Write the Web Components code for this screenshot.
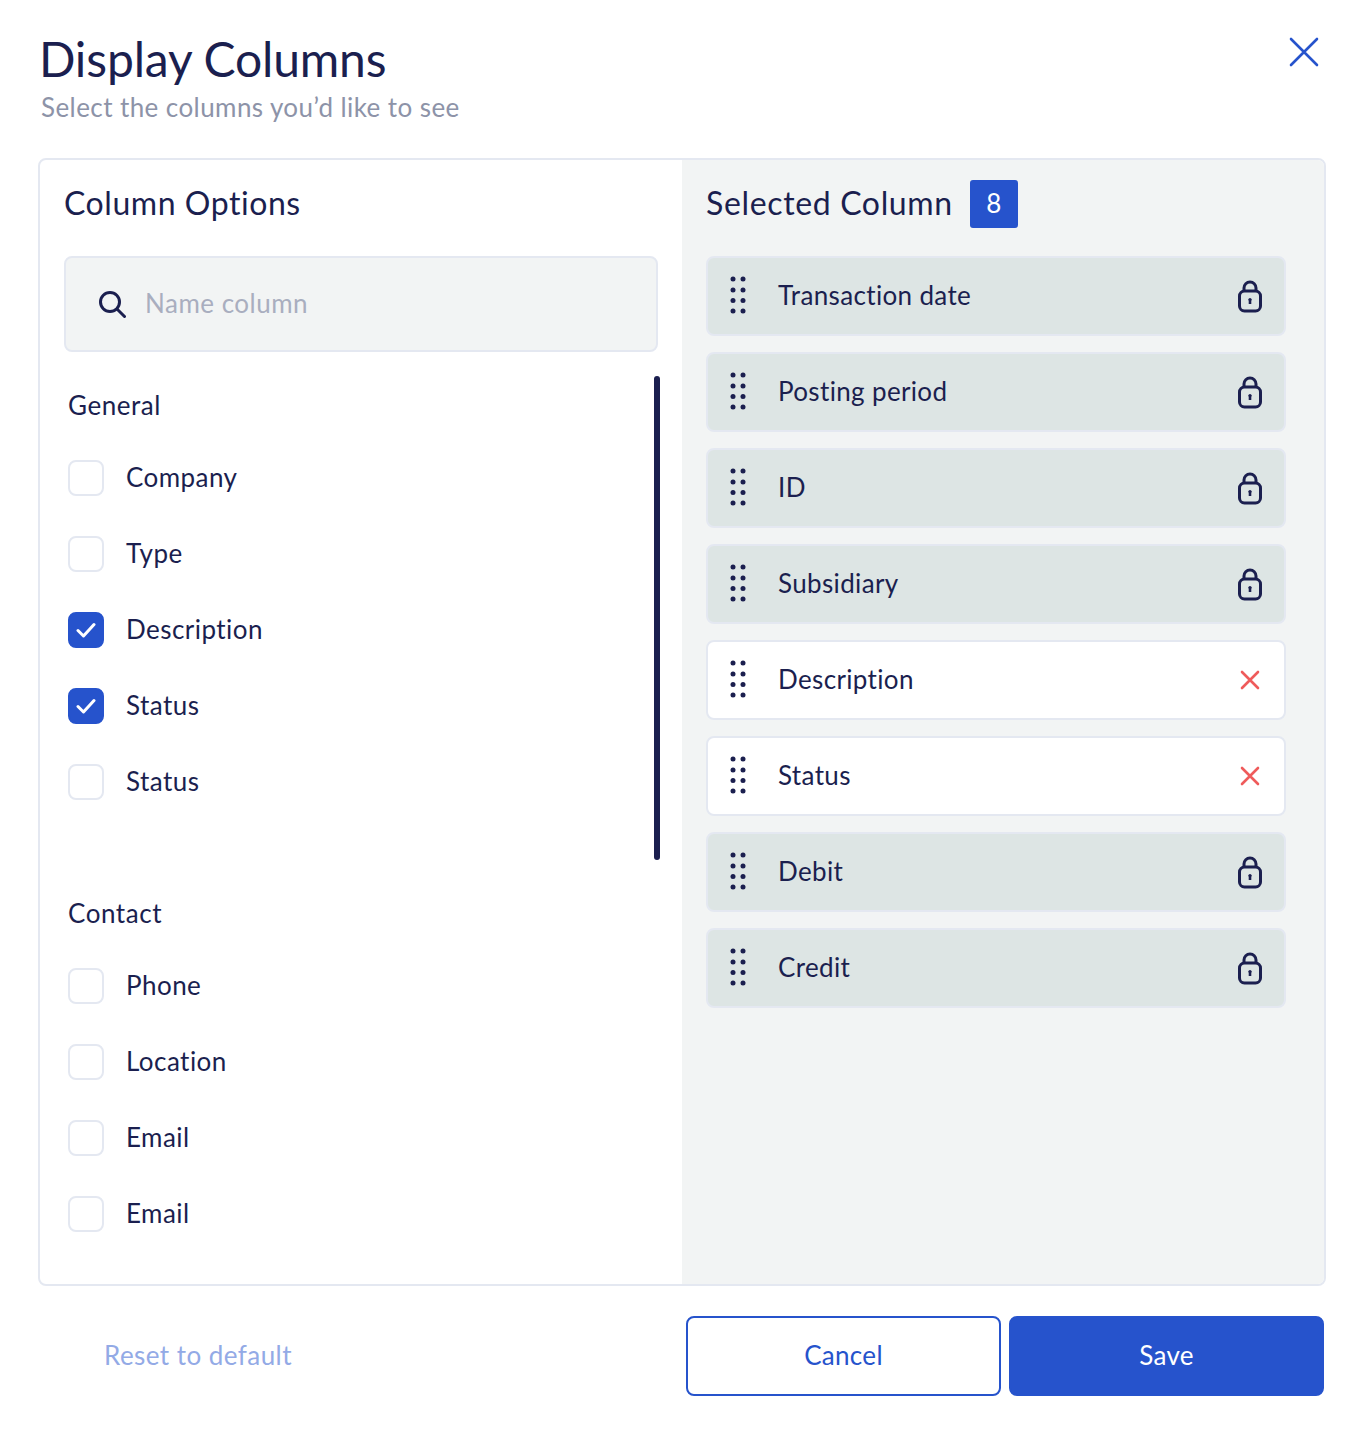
<!DOCTYPE html>
<html lang="en">
<head>
<meta charset="utf-8">
<title>Display Columns</title>
<style>
  html, body { margin: 0; background: #fff; }
  body { font-family: "Lato", "Liberation Sans", sans-serif; color: #1b1f4f; }
</style>
</head>
<body>
<display-columns>
  <column-options slot="left">
    <option-group title="General">
      <option-row label="Company"></option-row>
      <option-row label="Type"></option-row>
      <option-row label="Description" checked></option-row>
      <option-row label="Status" checked></option-row>
      <option-row label="Status"></option-row>
    </option-group>
    <option-group title="Contact">
      <option-row label="Phone"></option-row>
      <option-row label="Location"></option-row>
      <option-row label="Email"></option-row>
      <option-row label="Email"></option-row>
    </option-group>
  </column-options>
  <selected-columns slot="right" count="8">
    <selected-row label="Transaction date"></selected-row>
    <selected-row label="Posting period"></selected-row>
    <selected-row label="ID"></selected-row>
    <selected-row label="Subsidiary"></selected-row>
    <selected-row label="Description" removable></selected-row>
    <selected-row label="Status" removable></selected-row>
    <selected-row label="Debit"></selected-row>
    <selected-row label="Credit"></selected-row>
  </selected-columns>
</display-columns>

<script>
const displayColumnsTemplate = `
<style>
  :host { display: block; width: 1364px; height: 1436px; box-sizing: border-box; padding: 29px 38px 0; position: relative; }
  h1 { margin: 0 0 0 1px; font-size: 48px; font-weight: 400; line-height: 60px; color: #1b1f4f; letter-spacing: -0.15px; }
  .sub { margin: 0 0 0 3px; font-size: 26px; line-height: 36px; color: #8d93a8; height: 35px; letter-spacing: 0.42px; }
  .close { position: absolute; left: 1289px; top: 37px; width: 30px; height: 30px; }
  .frame { margin-top: 34px; height: 1128px; box-sizing: border-box; border: 2px solid #e4e8f1; border-radius: 8px; display: flex; overflow: hidden; }
  .left { width: 642px; flex: none; position: relative; }
  .right { flex: 1; background: #f2f4f4; }
  .foot { display: flex; align-items: center; margin-top: 30px; height: 80px; }
  .reset { margin-left: 66px; padding-bottom: 2px; font-size: 26px; color: #93aae6; flex: 1; letter-spacing: 0.45px; }
  .btn { width: 315px; height: 80px; box-sizing: border-box; border: 2px solid #2653cc; border-radius: 8px; display: flex; align-items: center; justify-content: center; padding-bottom: 2px; font-size: 26px; letter-spacing: 0.3px; color: #2653cc; }
  .save { background: #2653cc; color: #fff; margin-left: 8px; margin-right: 2px; }
</style>
<h1>Display Columns</h1>
<div class="sub">Select the columns you’d like to see</div>
<svg class="close" viewBox="0 0 30 30" fill="none" stroke="#2653cc" stroke-width="2.6" stroke-linecap="round"><path d="M2 2 28 28M28 2 2 28"/></svg>
<div class="frame">
  <div class="left"><slot name="left"></slot></div>
  <div class="right"><slot name="right"></slot></div>
</div>
<div class="foot">
  <div class="reset">Reset to default</div>
  <div class="btn">Cancel</div>
  <div class="btn save">Save</div>
</div>
`;

class DisplayColumns extends HTMLElement {
  constructor() {
    super();
    this.attachShadow({ mode: "open" });
    this.shadowRoot.innerHTML = displayColumnsTemplate;
  }
}

const columnOptionsTemplate = `
<style>
  :host { display: block; padding: 0 24px; }
  h2 { margin: 0; padding-top: 19px; height: 96px; box-sizing: border-box; font-size: 32px; font-weight: 400; line-height: 48px; letter-spacing: 0.55px; color: #1b1f4f; }
  .search { height: 96px; box-sizing: border-box; background: #f2f4f4; border: 2px solid #e4e8f1; border-radius: 8px; display: flex; align-items: center; padding: 0 0 2px 32px; font-size: 26px; letter-spacing: 0.5px; color: #a9aebf; }
  .search svg { width: 28px; height: 28px; margin: 2px 19px 0 0; flex: none; }
  .list { padding: 35px 0 0 4px; }
  .bar { position: absolute; left: 614px; top: 216px; width: 6px; height: 484px; border-radius: 3px; background: #1b1f4f; }
</style>
<h2>Column Options</h2>
<div class="search">
  <svg viewBox="0 0 28 28" fill="none" stroke="#1b1f4f" stroke-width="3" stroke-linecap="round"><circle cx="12" cy="12" r="9.5"/><path d="M19 19 26.5 26.5"/></svg>
  Name column
</div>
<div class="list"><slot></slot></div>
<div class="bar"></div>
`;

class ColumnOptions extends HTMLElement {
  constructor() {
    super();
    this.attachShadow({ mode: "open" });
    this.shadowRoot.innerHTML = columnOptionsTemplate;
  }
}

class OptionGroup extends HTMLElement {
  constructor() {
    super();
    this.attachShadow({ mode: "open" });
    this.shadowRoot.innerHTML = `
    <style>
      :host { display: block; height: 508px; }
      .title { font-size: 26px; line-height: 36px; height: 36px; letter-spacing: 0.55px; color: #1b1f4f; margin-bottom: 37px; }
      .rows { display: flex; flex-direction: column; gap: 40px; }
    </style>
    <div class="title"></div>
    <div class="rows"><slot></slot></div>`;
  }

  connectedCallback() {
    this.shadowRoot.querySelector(".title").textContent = this.getAttribute("title");
  }
}

class OptionRow extends HTMLElement {
  constructor() {
    super();
    this.attachShadow({ mode: "open" });
    this.shadowRoot.innerHTML = `
    <style>
      :host { display: flex; align-items: center; height: 36px; font-size: 26px; letter-spacing: 0.45px; color: #1b1f4f; }
      .box { width: 36px; height: 36px; box-sizing: border-box; border: 2px solid #e4e8f1; border-radius: 8px; margin-right: 22px; background: #fff; flex: none; }
      .box.on { background: #2653cc; border-color: #2653cc; display: flex; align-items: center; justify-content: center; }
      svg { width: 20px; height: 16px; }
      #label { margin-bottom: 2px; }
    </style>
    <div class="box"></div><span id="label"></span>`;
  }

  connectedCallback() {
    this.shadowRoot.querySelector("#label").textContent = this.getAttribute("label");
    if (this.hasAttribute("checked")) {
      const box = this.shadowRoot.querySelector(".box");
      box.classList.add("on");
      box.innerHTML = '<svg viewBox="0 0 20 16" fill="none" stroke="#fff" stroke-width="3" stroke-linecap="round" stroke-linejoin="round"><path d="M2 8.5 7.5 14 18 2.5"/></svg>';
    }
  }
}

class SelectedColumns extends HTMLElement {
  constructor() {
    super();
    this.attachShadow({ mode: "open" });
    this.shadowRoot.innerHTML = `
    <style>
      :host { display: block; padding: 20px 38px 0 24px; }
      .head { display: flex; align-items: center; height: 48px; margin-bottom: 28px; font-size: 32px; letter-spacing: 0.65px; color: #1b1f4f; }
      .title { margin-bottom: 4px; }
      .count { margin-left: 17px; width: 48px; height: 48px; box-sizing: border-box; padding-bottom: 2px; border-radius: 3px; background: #2653cc; color: #fff; font-size: 26px; letter-spacing: 0; display: flex; align-items: center; justify-content: center; }
      .rows { display: flex; flex-direction: column; gap: 16px; }
    </style>
    <div class="head"><span class="title">Selected Column</span><span class="count"></span></div>
    <div class="rows"><slot></slot></div>`;
  }

  connectedCallback() {
    this.shadowRoot.querySelector(".count").textContent = this.getAttribute("count");
  }
}

const lockIcon = '<svg width="24" height="34" viewBox="0 0 24 34" fill="none" stroke="#1b1f4f" stroke-width="3"><path d="M6 13V9a6 6 0 0 1 12 0v4"/><rect x="1.5" y="12" width="21" height="20" rx="5"/><path d="M12 20v5" stroke-width="2.6"/><circle cx="12" cy="20.5" r="1.6" fill="#1b1f4f" stroke="none"/></svg>';
const removeIcon = '<svg width="20" height="20" viewBox="0 0 20 20" fill="none" stroke="#ef5b5b" stroke-width="2.6" stroke-linecap="round"><path d="M2 2 18 18M18 2 2 18"/></svg>';
const gripIcon = '<svg width="16" height="38" viewBox="0 0 16 38" fill="#1b1f4f"><circle cx="3" cy="3" r="2.5"/><circle cx="13" cy="3" r="2.5"/><circle cx="3" cy="14" r="2.5"/><circle cx="13" cy="14" r="2.5"/><circle cx="3" cy="24.5" r="2.5"/><circle cx="13" cy="24.5" r="2.5"/><circle cx="3" cy="35" r="2.5"/><circle cx="13" cy="35" r="2.5"/></svg>';

class SelectedRow extends HTMLElement {
  constructor() {
    super();
    this.attachShadow({ mode: "open" });
    this.shadowRoot.innerHTML = `
    <style>
      :host { display: flex; align-items: center; height: 80px; box-sizing: border-box; padding: 0 22px 0 22px; border: 2px solid #e4e8f1; border-radius: 8px; background: #dde5e4; font-size: 26px; letter-spacing: 0.35px; color: #1b1f4f; }
      :host([removable]) { background: #fff; }
      #grip { display: flex; margin-right: 32px; margin-bottom: 2px; }
      #label { flex: 1; margin-bottom: 2px; }
      #icon { width: 24px; display: flex; justify-content: center; }
    </style>
    <div id="grip">${gripIcon}</div><span id="label"></span><div id="icon"></div>`;
  }

  connectedCallback() {
    this.shadowRoot.querySelector("#label").textContent = this.getAttribute("label");
    this.shadowRoot.querySelector("#icon").innerHTML = this.hasAttribute("removable") ? removeIcon : lockIcon;
  }
}

window.customElements.define("display-columns", DisplayColumns);
window.customElements.define("column-options", ColumnOptions);
window.customElements.define("option-group", OptionGroup);
window.customElements.define("option-row", OptionRow);
window.customElements.define("selected-columns", SelectedColumns);
window.customElements.define("selected-row", SelectedRow);
</script>
</body>
</html>
